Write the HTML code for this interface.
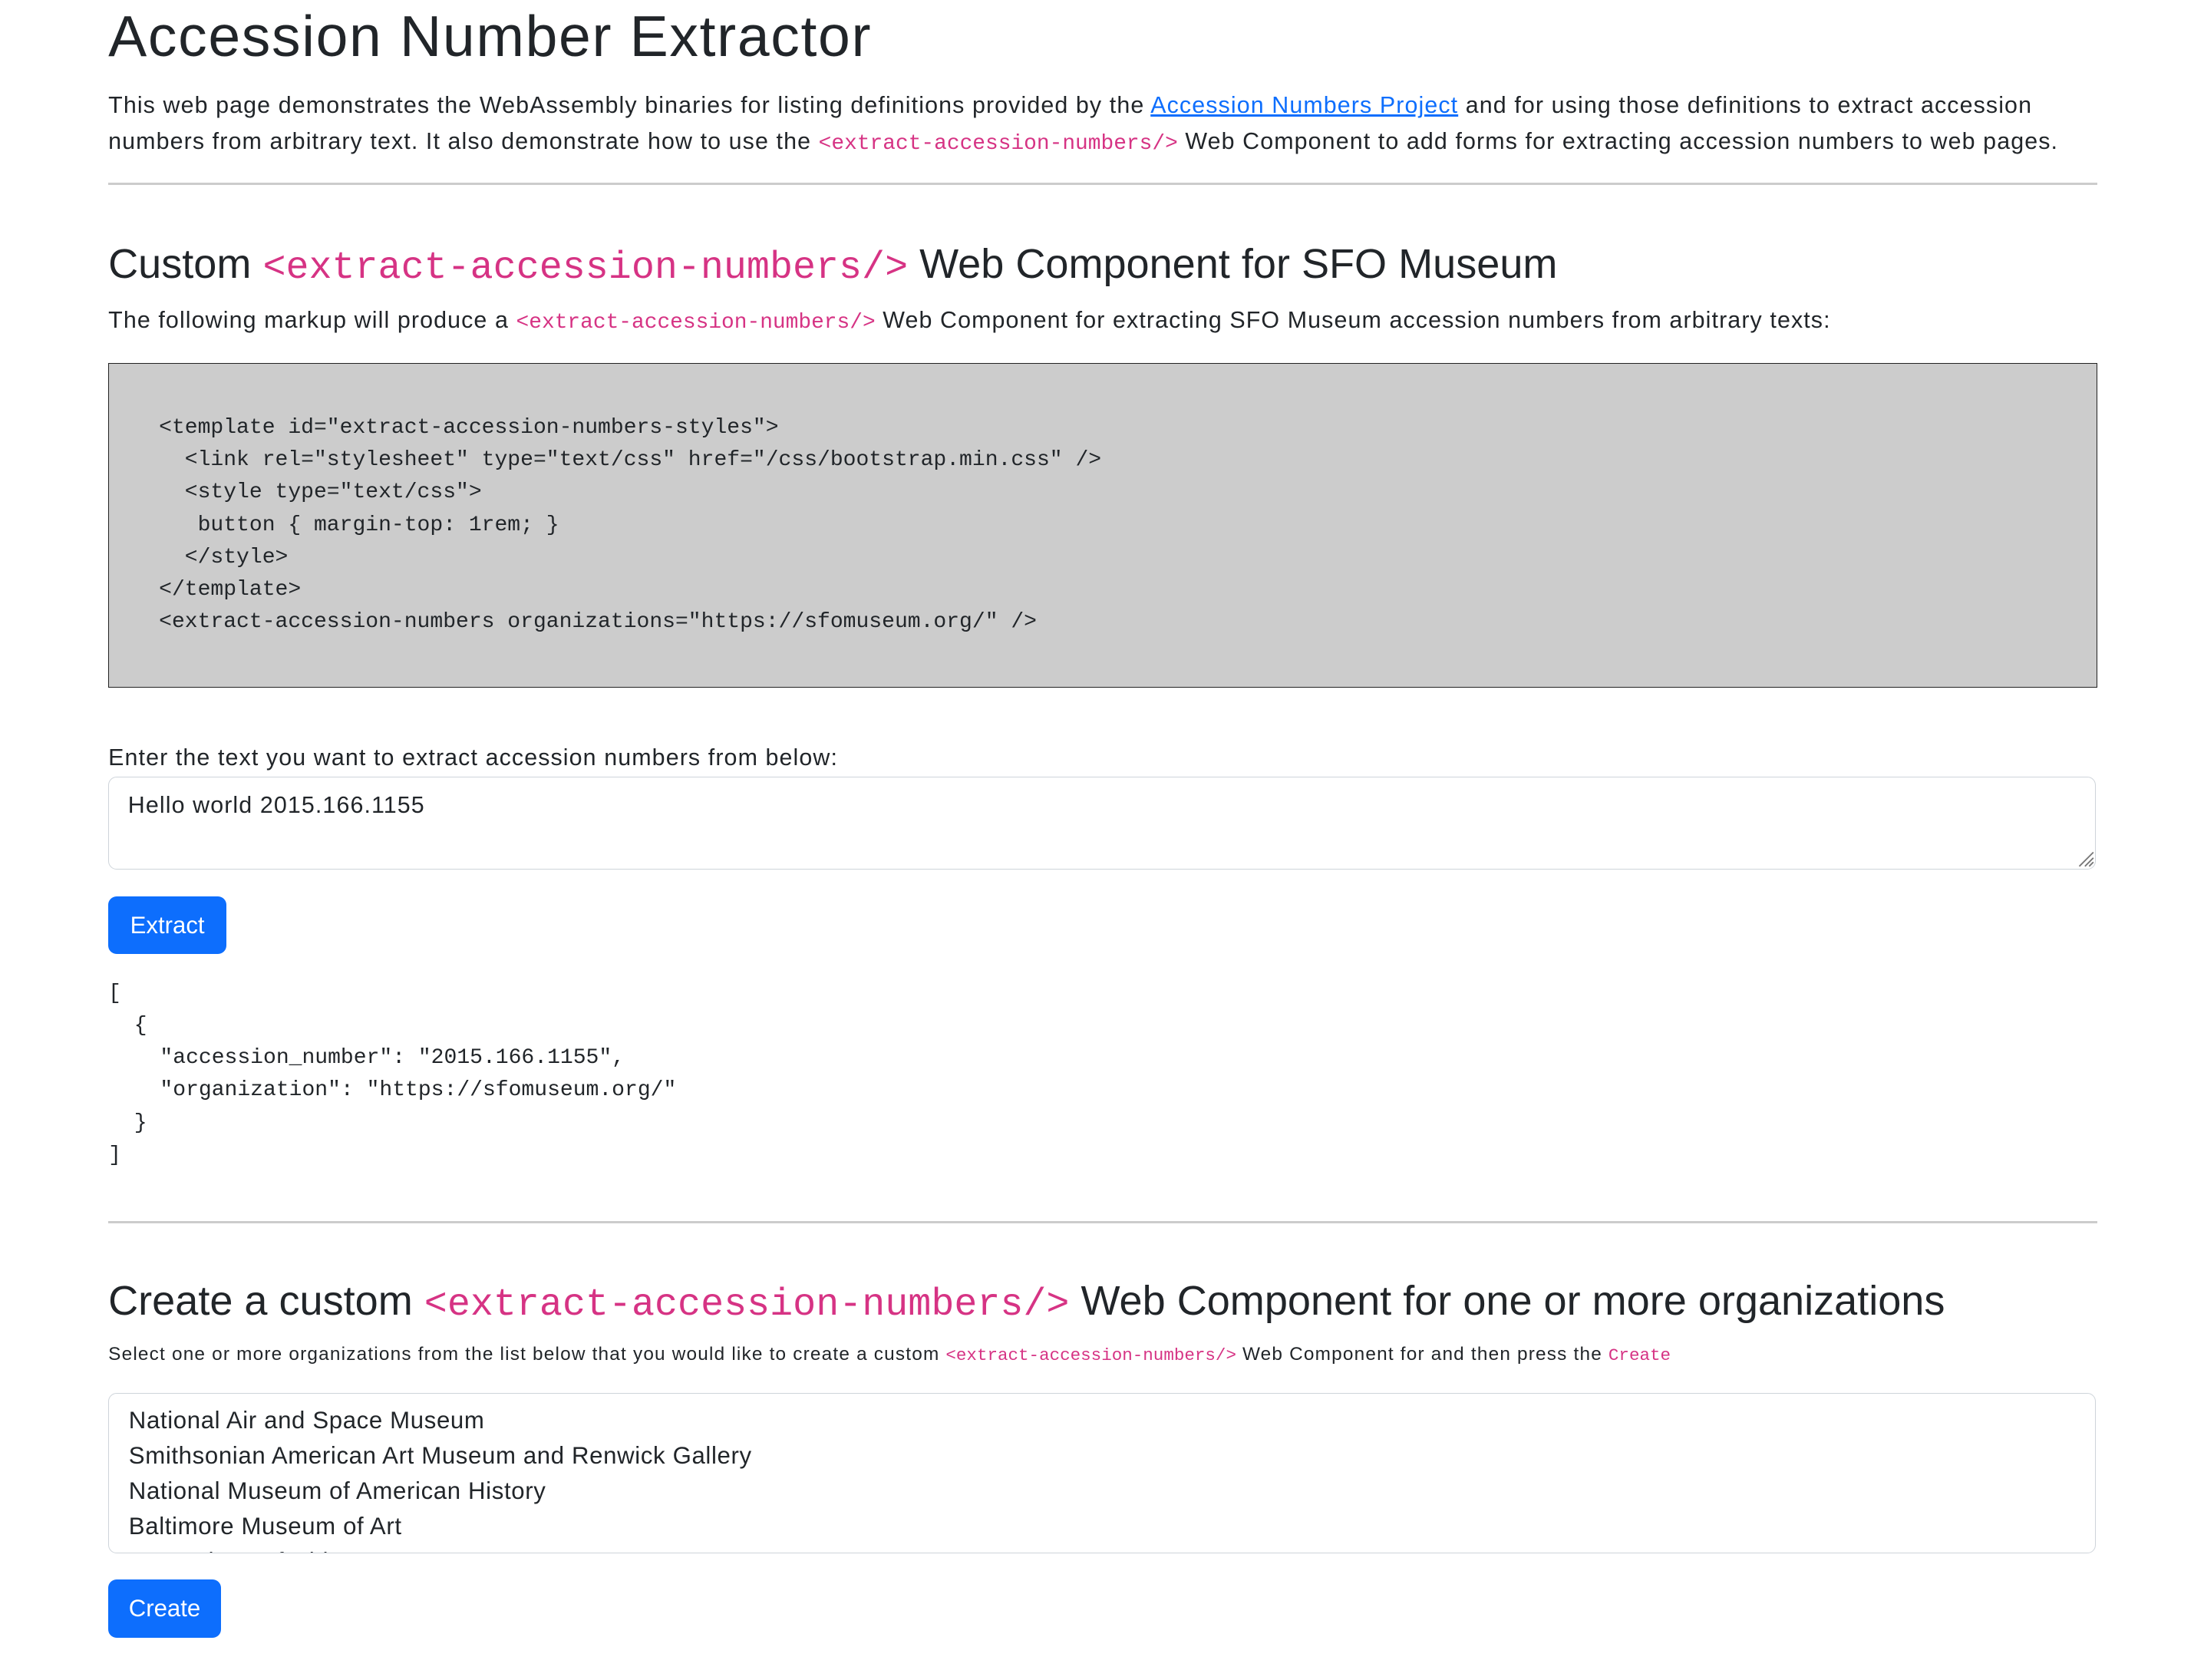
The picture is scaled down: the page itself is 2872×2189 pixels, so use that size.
<!DOCTYPE html>
<html><head><meta charset="utf-8"><style>
html,body{margin:0;padding:0;background:#fff;width:2872px;height:2189px;overflow:hidden}
#w{zoom:1.833;position:relative;width:1567px;height:1195px;font-family:"Liberation Sans",sans-serif;color:#212529}
.a{position:absolute;left:77px;white-space:nowrap}
code,.m{font-family:"Liberation Mono",monospace;color:#d63384;letter-spacing:0}
h1{font-size:41px;font-weight:500;margin:0;letter-spacing:0.9px}
h2{font-size:29.5px;font-weight:500;margin:0;letter-spacing:0}
h2 code{font-size:27.3px}
p{margin:0;font-size:16.6px;line-height:26px;letter-spacing:0.6px}
p code{font-size:15.2px}
hr{position:absolute;left:77px;width:1414px;border:0;border-top:2px solid #ccc;margin:0}
pre{margin:0;font-family:"Liberation Mono",monospace;font-size:15.3px;line-height:23px;color:#212529;white-space:pre!important}
.btn{position:absolute;left:77px;background:#0d6efd;color:#fff;border-radius:6px;font-size:17px;height:41px;line-height:41px;text-align:center}
a{color:#0d6efd;text-decoration:underline}
</style></head><body><div id="w">
<h1 class="a" style="top:2px">Accession Number Extractor</h1>
<p class="a" style="top:62px">This web page demonstrates the WebAssembly binaries for listing definitions provided by the <a>Accession Numbers Project</a> and for using those definitions to extract accession<br>numbers from arbitrary text. It also demonstrate how to use the <code>&lt;extract-accession-numbers/&gt;</code> Web Component to add forms for extracting accession numbers to web pages.</p>
<hr style="top:130px">
<h2 class="a" style="top:171px">Custom <code>&lt;extract-accession-numbers/&gt;</code> Web Component for SFO Museum</h2>
<p class="a" style="top:215px">The following markup will produce a <code>&lt;extract-accession-numbers/&gt;</code> Web Component for extracting SFO Museum accession numbers from arbitrary texts:</p>
<div style="position:absolute;left:77px;top:258px;width:1413px;height:230px;background:#ccc;border:1px solid #222"></div>
<pre class="a" style="left:113px;top:293px">&lt;template id="extract-accession-numbers-styles"&gt;
  &lt;link rel="stylesheet" type="text/css" href="/css/bootstrap.min.css" /&gt;
  &lt;style type="text/css"&gt;
   button { margin-top: 1rem; }
  &lt;/style&gt;
&lt;/template&gt;
&lt;extract-accession-numbers organizations="https://sfomuseum.org/" /&gt;</pre>
<p class="a" style="top:526px">Enter the text you want to extract accession numbers from below:</p>
<div style="position:absolute;left:77px;top:552px;width:1412px;height:65px;border:1px solid #ced4da;border-radius:6px"></div>
<p class="a" style="left:91px;top:560px">Hello world 2015.166.1155</p>
<svg style="position:absolute;left:1475px;top:603px" width="14" height="14"><path d="M13 3L3 13M13 7L7 13M13 10L10 13" stroke="#777" stroke-width="1"/></svg>
<div class="btn" style="top:637px;width:84px">Extract</div>
<pre class="a" style="top:695px">[
  {
    "accession_number": "2015.166.1155",
    "organization": "https://sfomuseum.org/"
  }
]</pre>
<hr style="top:868px">
<h2 class="a" style="top:908px">Create a custom <code>&lt;extract-accession-numbers/&gt;</code> Web Component for one or more organizations</h2>
<p class="a" style="top:951px;font-size:13.3px;line-height:24px;letter-spacing:0.65px">Select one or more organizations from the list below that you would like to create a custom <code style="font-size:12.3px">&lt;extract-accession-numbers/&gt;</code> Web Component for and then press the <code style="font-size:12.3px">Create</code></p>
<div style="position:absolute;left:77px;top:990px;width:1412px;height:113px;border:1px solid #ced4da;border-radius:6px;overflow:hidden">
<div style="position:absolute;left:14px;top:7px;font-size:17px;line-height:25px;white-space:nowrap;letter-spacing:0.35px">National Air and Space Museum<br>Smithsonian American Art Museum and Renwick Gallery<br>National Museum of American History<br>Baltimore Museum of Art<br>Art Institute of Chicago</div></div>
<div class="btn" style="top:1123px;width:80px">Create</div>
</div></body></html>
